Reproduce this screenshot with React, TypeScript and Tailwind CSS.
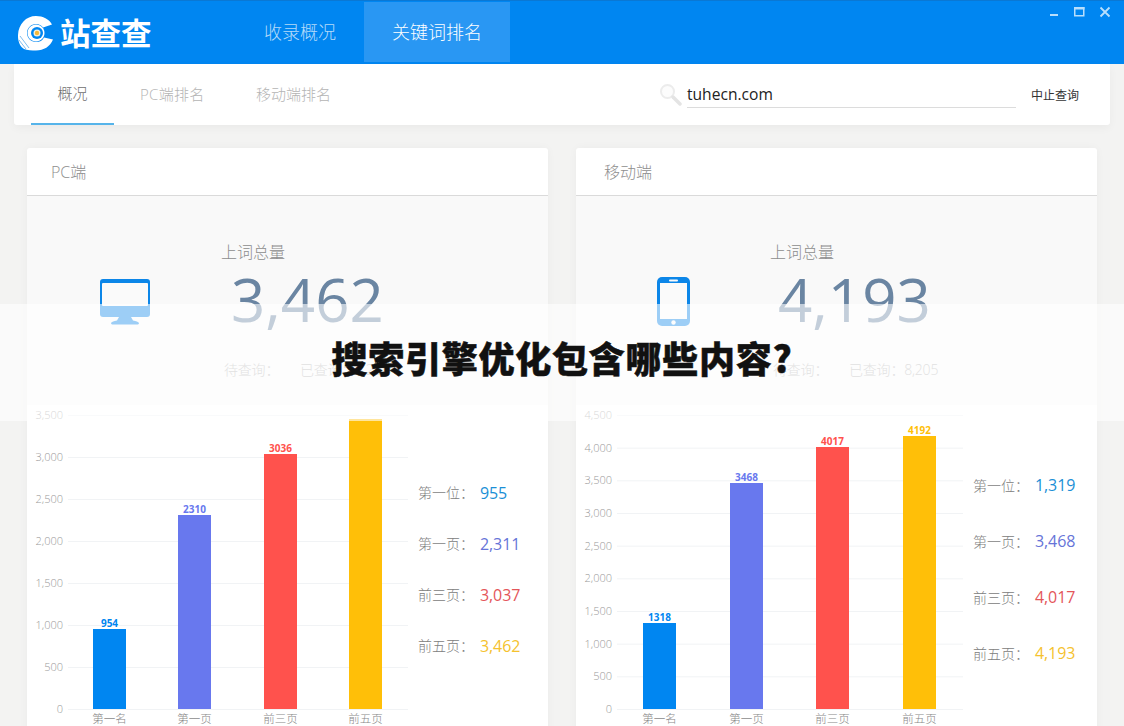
import React from "react";

type Bar = { x: number; h: number; label: string; value: string; color: string };
type Legend = { label: string; value: string; cls: string };
type PanelData = {
  title: string;
  titleCls: string;
  total: string;
  done: string;
  ticks: string[];
  gridEnd: number;
  axis: number;
  bars: Bar[];
  legend: Legend[];
  rowCls: string;
  chartW: number;
  numCls: string;
  iconCls: string;
  statCls: string;
  icon: React.ReactNode;
};

const Monitor = () => (
  <svg width="50" height="46" viewBox="0 0 50 46">
    <path d="M3 0h44a3 3 0 0 1 3 3v32a3 3 0 0 1-3 3H3a3 3 0 0 1-3-3V3a3 3 0 0 1 3-3z" fill="#0c86e8" />
    <rect x="2" y="4" width="46" height="23" rx="1" fill="#fafafa" />
    <path d="M19 38h12l2 3.500c3 .6 5.500 1.200 6 2.500 0 1-1 1.500-2 1.500H13c-1 0-2-.5-2-1.500.5-1.300 3-1.900 6-2.500z" fill="#0c86e8" />
  </svg>
);

const Phone = () => (
  <svg width="33" height="49" viewBox="0 0 33 49">
    <rect width="33" height="49" rx="5" fill="#0c86e8" />
    <rect x="3" y="6" width="27" height="36" fill="#fafafa" />
    <rect x="12" y="2.500" width="9" height="2" rx="1" fill="#fafafa" />
    <circle cx="16.500" cy="45.500" r="2.200" fill="#fafafa" />
  </svg>
);

const panels: PanelData[] = [
  {
    title: "PC端",
    titleCls: "pl-6",
    total: "3,462",
    done: "已查询：8,205",
    ticks: ["0", "500", "1,000", "1,500", "2,000", "2,500", "3,000", "3,500"],
    gridEnd: 381,
    axis: 36,
    chartW: 381,
    bars: [
      { x: 66, h: 80, label: "第一名", value: "954", color: "#0086f1" },
      { x: 151, h: 194, label: "第一页", value: "2310", color: "#6878ee" },
      { x: 237, h: 255, label: "前三页", value: "3036", color: "#ff524d" },
      { x: 322, h: 290, label: "前五页", value: "", color: "#ffbf08" },
    ],
    legend: [
      { label: "第一位：", value: "955", cls: "text-[#1b8fd6]" },
      { label: "第一页：", value: "2,311", cls: "text-[#6674d8]" },
      { label: "前三页：", value: "3,037", cls: "text-[#e4565a]" },
      { label: "前五页：", value: "3,462", cls: "text-[#f5c22e]" },
    ],
    rowCls: "h-[51px]",
    numCls: "ml-[10px]",
    iconCls: "ml-[73px] mt-[83px] w-[50px]",
    statCls: "ml-[71px] pt-[46px]",
    icon: <Monitor />,
  },
  {
    title: "移动端",
    titleCls: "pl-[28px]",
    total: "4,193",
    done: "已查询：8,205",
    ticks: ["0", "500", "1,000", "1,500", "2,000", "2,500", "3,000", "3,500", "4,000", "4,500"],
    gridEnd: 388,
    axis: 36,
    chartW: 387,
    bars: [
      { x: 67, h: 86, label: "第一名", value: "1318", color: "#0086f1" },
      { x: 154, h: 226, label: "第一页", value: "3468", color: "#6878ee" },
      { x: 240, h: 262, label: "前三页", value: "4017", color: "#ff524d" },
      { x: 327, h: 273, label: "前五页", value: "4192", color: "#ffbf08" },
    ],
    legend: [
      { label: "第一位：", value: "1,319", cls: "text-[#1b8fd6]" },
      { label: "第一页：", value: "3,468", cls: "text-[#6674d8]" },
      { label: "前三页：", value: "4,017", cls: "text-[#e4565a]" },
      { label: "前五页：", value: "4,193", cls: "text-[#f5c22e]" },
    ],
    rowCls: "h-[56px]",
    numCls: "ml-[8px]",
    iconCls: "ml-[81px] mt-[81px] w-[33px]",
    statCls: "ml-[80px] pt-[46px]",
    icon: <Phone />,
  },
];

function Chart({ p }: { p: PanelData }) {
  const base = 304;
  const step = 294 / (p.ticks.length - 1);
  return (
    <svg width={p.chartW} height="330" viewBox={`0 0 ${p.chartW} 330`} className="shrink-0">
      {p.ticks.map((t, i) => {
        const y = base - i * step;
        return (
          <g key={t}>
            <line x1={p.axis + 5} x2={p.gridEnd} y1={y + 0.5} y2={y + 0.5} stroke="#f1f3f5" />
            <text x={p.axis} y={y + 4} textAnchor="end" fontSize="11" fill="#999" fontWeight="300">
              {t}
            </text>
          </g>
        );
      })}
      {p.bars.map((b) => (
        <g key={b.label}>
          <rect x={b.x} y={base - b.h} width="33" height={b.h} fill={b.color} />
          {b.value && (
            <text x={b.x + 16.5} y={base - b.h - 2.500} textAnchor="middle" fontSize="10" fontWeight="700" fill={b.color}>
              {b.value}
            </text>
          )}
          <text x={b.x + 16.5} y={base + 14} textAnchor="middle" fontSize="11.500" fill="#888" fontWeight="300">
            {b.label}
          </text>
        </g>
      ))}
    </svg>
  );
}

function Panel({ p }: { p: PanelData }) {
  return (
    <section className="w-[521px] shrink-0 bg-white rounded-t-[3px] shadow-[0_0_10px_rgba(0,0,0,0.035)]">
      <h2 className={`${p.titleCls} h-[48px] leading-[48px] text-[16px] font-light text-[#8e8e8e] border-b border-[#dadada]`}>{p.title}</h2>
      <div className="h-[209px] bg-[#f9f9f9] flex">
        <div className={`${p.iconCls} shrink-0`}>{p.icon}</div>
        <div className={p.statCls}>
          <div className="text-[16px] leading-[20px] font-light text-[#8c8c8c]">上词总量</div>
          <div className={`${p.numCls} mt-[4px] text-[60px] leading-[66px] font-normal text-[#6a85a2]`}>{p.total}</div>
          <div className="mt-[28px] flex text-[14px] leading-[20px] font-light tracking-[-0.2px] text-[#b4b4b4]">
            <span className="ml-[3px] w-[76px]">待查询：</span>
            <span className="whitespace-nowrap">{p.done}</span>
          </div>
        </div>
      </div>
      <div className="flex h-[330px]">
        <Chart p={p} />
        <div className="ml-[10px] pb-[2px] flex flex-col justify-center">
          {p.legend.map((l) => (
            <div key={l.label} className={`${p.rowCls} flex items-center`}>
              <span className="w-[62px] text-[14px] font-light text-[#808080]">{l.label}</span>
              <span className={`text-[16px] tracking-[-0.1px] ${l.cls}`}>{l.value}</span>
            </div>
          ))}
        </div>
      </div>
    </section>
  );
}

export default function App() {
  return (
    <div className="relative w-[1124px] h-[726px] overflow-hidden bg-[#f3f3f2] font-['Open_Sans','Noto_Sans_CJK_SC',sans-serif]">
      <header className="h-[64px] bg-[#0086f1] flex border-t border-[#0a78d4]">
        <div className="w-[236px] shrink-0 flex items-center pl-[18px]">
          <svg width="36" height="36" viewBox="0 0 36 36">
            <path d="M18 1C8 1 .5 9 0 20c-.3 6 2 12 6 14 3 1.500 8 1.500 12 1.500 8 0 14-4 17-11l-9-2c-1.500 3-4 4.500-8 4.500-5 0-9-4-9-9s4-9 9-9c3 0 5.500 1.200 7 3.500l9-3C31 4 25 1 18 1z" fill="#fff" />
            <path d="M18 9.500c4.700 0 8.500 3.800 8.500 8.500s-3.800 8.500-8.500 8.500-8.500-3.800-8.500-8.500 3.800-8.500 8.500-8.500z" fill="#fff" />
            <circle cx="19" cy="18" r="6" fill="#0086f1" />
            <circle cx="19" cy="18" r="3.500" fill="#f3f0df" />
            <circle cx="19" cy="18" r="2.200" fill="#f5b93a" />
            <path d="M2 21l9 12M1 25l7 9" stroke="#7fbdf0" strokeWidth="1" />
          </svg>
          <span className="ml-[6px] text-[30.500px] leading-none font-bold text-white font-['Noto_Sans_CJK_SC',sans-serif] whitespace-nowrap">站查查</span>
        </div>
        <nav className="flex h-[60px] mt-[1px]">
          <a className="w-[128px] flex items-center justify-center text-[18px] font-light text-[#b4daf9]">收录概况</a>
          <a className="w-[146px] flex items-center justify-center text-[18px] font-light text-white bg-[#2997f3]">关键词排名</a>
        </nav>
        <div className="ml-auto mr-[13px] mt-[5px] flex gap-[14px] h-[12px] items-start">
          <svg width="10" height="12" viewBox="0 0 10 12"><rect x="1" y="8" width="8" height="2" fill="#b8defc" /></svg>
          <svg width="12" height="12" viewBox="0 0 12 12"><rect x="1.750" y="1.750" width="9" height="8" fill="none" stroke="#b8defc" strokeWidth="1.500" /><rect x="1" y="1" width="10.500" height="2.500" fill="#b8defc" /></svg>
          <svg width="12" height="12" viewBox="0 0 12 12"><path d="M1.500 1.500l9 9M10.500 1.500l-9 9" stroke="#b8defc" strokeWidth="1.800" /></svg>
        </div>
      </header>

      <div className="mx-[14px] h-[61px] bg-white rounded-b-[3px] shadow-[0_3px_10px_rgba(0,0,0,0.04)] flex items-center">
        <div className="ml-[17px] flex h-full text-[15px] font-light text-[#b4b4b4] whitespace-nowrap">
          <a className="w-[83px] h-full flex items-center justify-center text-[#707070] border-b-2 border-[#56b4ea]">概况</a>
          <a className="w-[117px] pl-[26px] flex items-center tracking-[0.3px]">PC端排名</a>
          <a className="pl-[25px] flex items-center">移动端排名</a>
        </div>
        <div className="ml-auto flex items-center">
          <svg width="23" height="23" viewBox="0 0 23 23" className="mr-[5px]">
            <circle cx="8.500" cy="8.500" r="6.500" fill="#fcfcfc" stroke="#ececec" strokeWidth="2" />
            <path d="M14 14l7 7" stroke="#e4e4e4" strokeWidth="3.500" strokeLinecap="round" />
          </svg>
          <div className="w-[329px] h-[26px] border-b border-[#dcdcdc] text-[15.600px] leading-[24px] text-[#222]">tuhecn.com</div>
          <button className="ml-[15px] mr-[31px] mt-[2px] text-[12px] text-[#333] whitespace-nowrap">中止查询</button>
        </div>
      </div>

      <main className="flex gap-[28px] pl-[27px] pt-[23px]">
        {panels.map((p) => (
          <Panel key={p.title} p={p} />
        ))}
      </main>

      <div className="absolute left-0 right-0 top-[304px] h-[117px] bg-white/60 flex items-center justify-center pb-[12px]">
        <h1 className="text-[36px] leading-none font-black tracking-[0.75px] text-[#111] [-webkit-text-stroke:0.5px_#111] font-['Noto_Sans_CJK_SC',sans-serif] whitespace-nowrap">搜索引擎优化包含哪些内容?</h1>
      </div>
    </div>
  );
}
